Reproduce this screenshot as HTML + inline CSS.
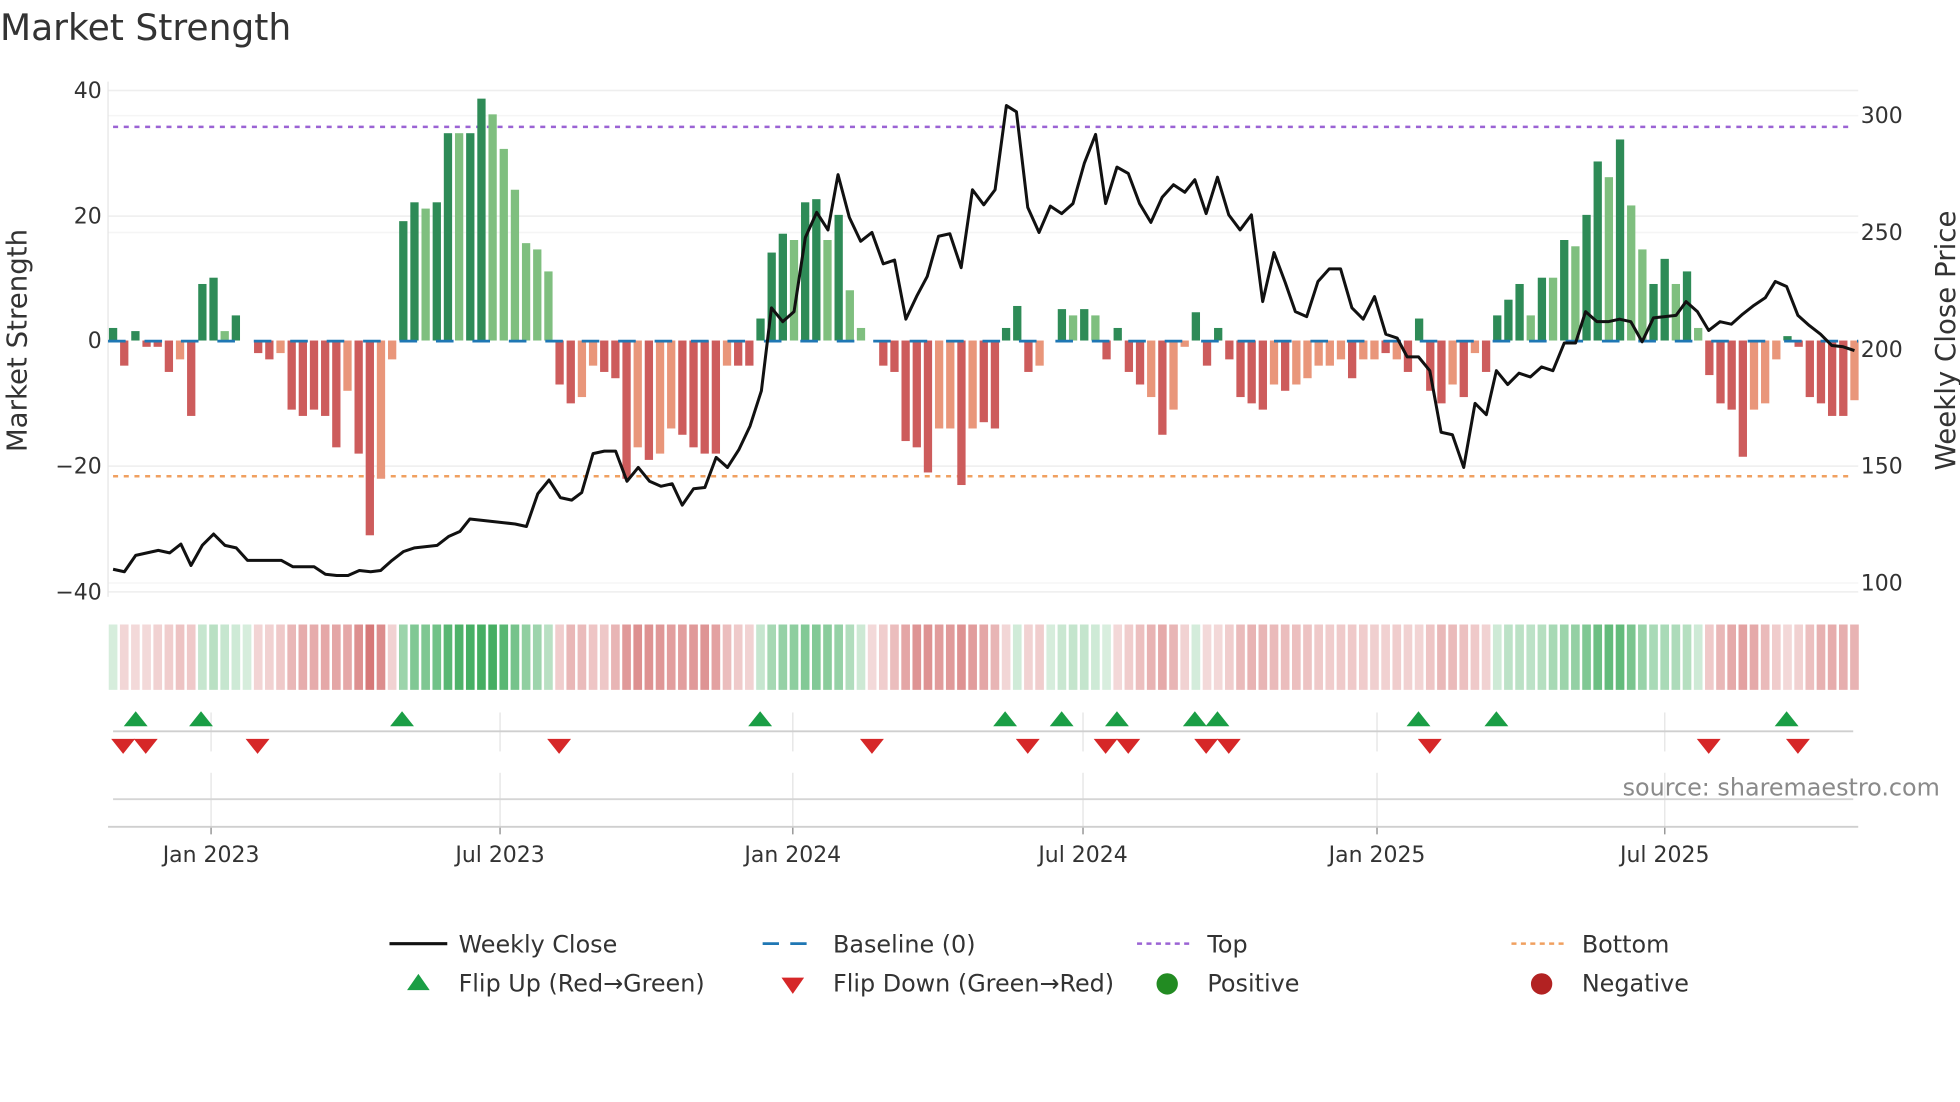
<!DOCTYPE html>
<html><head><meta charset="utf-8"><style>
html,body{margin:0;padding:0;background:#fff;}
svg{display:block;}
text{font-family:"DejaVu Sans","Liberation Sans",sans-serif;fill:#333;}
</style></head><body>
<svg id="s" width="1960" height="1102" viewBox="0 0 1560 877" preserveAspectRatio="none" xmlns="http://www.w3.org/2000/svg">
<rect width="1560" height="877" fill="#fff"/>
<text x="0" y="32" font-size="28.7">Market Strength</text>
<g stroke="#eeeeee" stroke-width="1.2">
<line x1="86" x2="1479" y1="72" y2="72"/><line x1="86" x2="1479" y1="172" y2="172"/><line x1="86" x2="1479" y1="371" y2="371"/><line x1="86" x2="1479" y1="471" y2="471"/>
<line x1="86" x2="1479" y1="92" y2="92" stroke="#f5f5f5"/><line x1="86" x2="1479" y1="185" y2="185" stroke="#f5f5f5"/><line x1="86" x2="1479" y1="464" y2="464" stroke="#f5f5f5"/>
</g>
<line x1="86" x2="86" y1="65" y2="475" stroke="#e6e6e6" stroke-width="1"/>
<g font-size="17.5" text-anchor="end">
<text x="81" y="78">40</text><text x="81" y="178">20</text><text x="81" y="277">0</text><text x="81" y="377">−20</text><text x="81" y="477">−40</text>
</g>
<g font-size="17.5">
<text x="1481" y="98">300</text><text x="1481" y="191">250</text><text x="1481" y="284">200</text><text x="1481" y="377">150</text><text x="1481" y="470">100</text>
</g>
<text transform="translate(21,271) rotate(-90)" font-size="22" text-anchor="middle">Market Strength</text>
<text transform="translate(1556,271) rotate(-90)" font-size="22" text-anchor="middle">Weekly Close Price</text>
<line x1="90" x2="1475" y1="101" y2="101" stroke="#9b63d4" stroke-width="2" stroke-dasharray="4,4.5"/>
<line x1="90" x2="1475" y1="379" y2="379" stroke="#f0a060" stroke-width="2" stroke-dasharray="4,4.5"/>
<g id="bars"></g>
<line x1="86" x2="1479" y1="271.5" y2="271.5" stroke="#1f77b4" stroke-width="2.2" stroke-dasharray="14,15"/>
<polyline id="price" fill="none" stroke="#111" stroke-width="2.4" stroke-linejoin="round"/>
<g id="heat"></g>
<g stroke="#e8e8e8" stroke-width="1.2" id="vg"></g>
<line x1="90" x2="1475" y1="582" y2="582" stroke="#cfcfcf" stroke-width="1.5"/>
<line x1="90" x2="1475" y1="636" y2="636" stroke="#d5d5d5" stroke-width="1.5"/>
<line x1="86" x2="1479" y1="658" y2="658" stroke="#cfcfcf" stroke-width="1.5"/>
<g id="mk"></g>
<text x="1544" y="633" font-size="19" text-anchor="end" style="fill:#8a8a8a">source: sharemaestro.com</text>
<g font-size="17.5" text-anchor="middle">
<text x="168" y="686">Jan 2023</text><text x="398" y="686">Jul 2023</text><text x="631" y="686">Jan 2024</text><text x="862" y="686">Jul 2024</text><text x="1096" y="686">Jan 2025</text><text x="1325" y="686">Jul 2025</text>
</g>
<g font-size="19">
<line x1="310" x2="356" y1="751" y2="751" stroke="#111" stroke-width="2.5"/>
<text x="365" y="758">Weekly Close</text>
<line x1="607" x2="650" y1="751" y2="751" stroke="#1f77b4" stroke-width="2.2" stroke-dasharray="13,9"/>
<text x="663" y="758">Baseline (0)</text>
<line x1="905" x2="948" y1="751" y2="751" stroke="#9b63d4" stroke-width="2" stroke-dasharray="4,3.5"/>
<text x="961" y="758">Top</text>
<line x1="1203" x2="1247" y1="751" y2="751" stroke="#f0a060" stroke-width="2" stroke-dasharray="4,3.5"/>
<text x="1259" y="758">Bottom</text>
<polygon points="324,788 342,788 333,775" fill="#1a9e45"/>
<text x="365" y="789">Flip Up (Red→Green)</text>
<polygon points="622,778 640,778 631,791" fill="#d62728"/>
<text x="663" y="789">Flip Down (Green→Red)</text>
<circle cx="929" cy="783" r="8.5" fill="#228b22"/>
<text x="961" y="789">Positive</text>
<circle cx="1227" cy="783" r="8.5" fill="#b22222"/>
<text x="1259" y="789">Negative</text>
</g>
</svg>
<script>
var NS="http://www.w3.org/2000/svg";
function el(t,a,p){var e=document.createElementNS(NS,t);for(var k in a)e.setAttribute(k,a[k]);p.appendChild(e);return e;}
var d="2G -4R 1.5G -1R -1R -5R -3r -12R 9G 10G 1.5g 4G 0 -2R -3R -2r -11R -12R -11R -12R -17R -8r -18R -31R -22r -3r 19G 22G 21g 22G 33G 33g 33G 38.5G 36g 30.5g 24g 15.5g 14.5g 11g -7R -10R -9r -4r -5R -6R -22R -17r -19R -18r -14r -15R -17R -18R -18R -4r -4R -4R 3.5G 14G 17G 16g 22G 22.5G 16g 20G 8g 2g 0 -4R -5R -16R -17R -21R -14r -14r -23R -14r -13R -14R 2G 5.5G -5R -4r 0 5G 4g 5G 4g -3R 2G -5R -7R -9r -15R -11r -1r 4.5G -4R 2G -3R -9R -10R -11R -7r -8R -7r -6r -4r -4r -3r -6R -3r -3r -2R -3r -5R 3.5G -8R -10R -7r -9R -2r -5R 4G 6.5G 9G 4g 10G 10g 16G 15g 20G 28.5G 26g 32G 21.5g 14.5g 9G 13G 9g 11G 2g -5.5R -10R -11R -18.5R -11r -10r -3r 0.7G -1R -9R -10R -12R -12R -9.5r".split(" ");
var col={G:"#2e8b57",g:"#7fbf7f",R:"#cd5c5c",r:"#e9967a"};
var n=d.length, x0=90, dx=(1476-90)/(n-1), bw=6.6;
var bars=document.getElementById("bars"), heat=document.getElementById("heat");
var vals=[];
for(var i=0;i<n;i++){var s=d[i];var v=parseFloat(s);var t=s.replace(/[-0-9.]/g,"")||"G";vals.push(v);
 var x=x0+i*dx; if(v!==0){var y=v>0?271-v*5:271;el("rect",{x:x-bw/2,y:y,width:bw,height:Math.abs(v)*5,fill:col[t]},bars);}}
for(var i=0;i<n;i++){var a=vals[Math.max(0,i-1)],b=vals[i],c=vals[Math.min(n-1,i+1)];var v=(a+2*b+c)/4;
 var x=x0+i*dx,f;
 if(v>=0){var al=0.2+0.75*Math.min(v/35,1);f="rgba(60,170,90,"+al.toFixed(2)+")";}
 else{var al=0.22+0.6*Math.min(-v/25,1);f="rgba(205,90,90,"+al.toFixed(2)+")";}
 el("rect",{x:x-dx/2+1,y:497,width:dx-2,height:52,fill:f},heat);}
var p="90,453 99,455 108,442 117,440 126,438 135,440 144,433 152,450 161,434 170,425 179,434 188,436 197,446 206,446 215,446 224,446 233,451 242,451 250,451 259,457 268,458 277,458 286,454 295,455 303,454 312,446 321,439 330,436 339,435 348,434 357,427 366,423 374,413 383,414 392,415 401,416 410,417 419,419 428,393 437,382 446,396 455,398 463,392 472,361 481,359 490,359 499,383 508,372 517,383 526,387 535,385 543,402 552,389 561,388 570,364 579,372 588,358 597,339 606,311 614,245 623,256 632,248 641,189 650,169 659,183 667,139 676,173 685,192 694,185 703,210 712,207 721,254 730,235 738,220 747,188 756,186 765,213 774,151 783,163 792,151 801,84 809,89 818,165 827,185 836,164 845,170 854,162 863,130 872,107 880,162 889,133 898,138 907,162 916,177 925,157 934,147 943,153 951,143 960,170 969,141 978,171 987,183 996,171 1005,240 1014,201 1023,225 1031,248 1040,252 1049,224 1058,214 1067,214 1076,245 1085,254 1094,236 1103,266 1112,269 1120,284 1129,284 1138,295 1147,344 1156,346 1165,372 1174,321 1183,330 1191,295 1200,306 1209,297 1218,300 1227,292 1236,295 1245,273 1254,273 1262,248 1271,256 1280,256 1289,254 1298,256 1307,272 1316,253 1325,252 1334,251 1342,240 1351,248 1360,263 1369,256 1378,258 1387,250 1396,243 1405,237 1413,224 1422,228 1431,251 1440,259 1449,266 1458,275 1467,276 1476,279";
document.getElementById("price").setAttribute("points",p);
var vg=document.getElementById("vg");
[168,398,631,862,1096,1325].forEach(function(x){el("line",{x1:x,x2:x,y1:567,y2:598},vg);el("line",{x1:x,x2:x,y1:615,y2:658},vg);el("line",{x1:x,x2:x,y1:658,y2:664,stroke:"#999"},vg);});
var mk=document.getElementById("mk");
[108,160,320,605,800,845,889,951,969,1129,1191,1422].forEach(function(x){el("polygon",{points:(x-9.5)+",578 "+(x+9.5)+",578 "+x+",566",fill:"#1a9e45"},mk);});
[98,116,205,445,694,818,880,898,960,978,1138,1360,1431].forEach(function(x){el("polygon",{points:(x-9.5)+",588 "+(x+9.5)+",588 "+x+",600",fill:"#d62728"},mk);});
</script>
</body></html>
